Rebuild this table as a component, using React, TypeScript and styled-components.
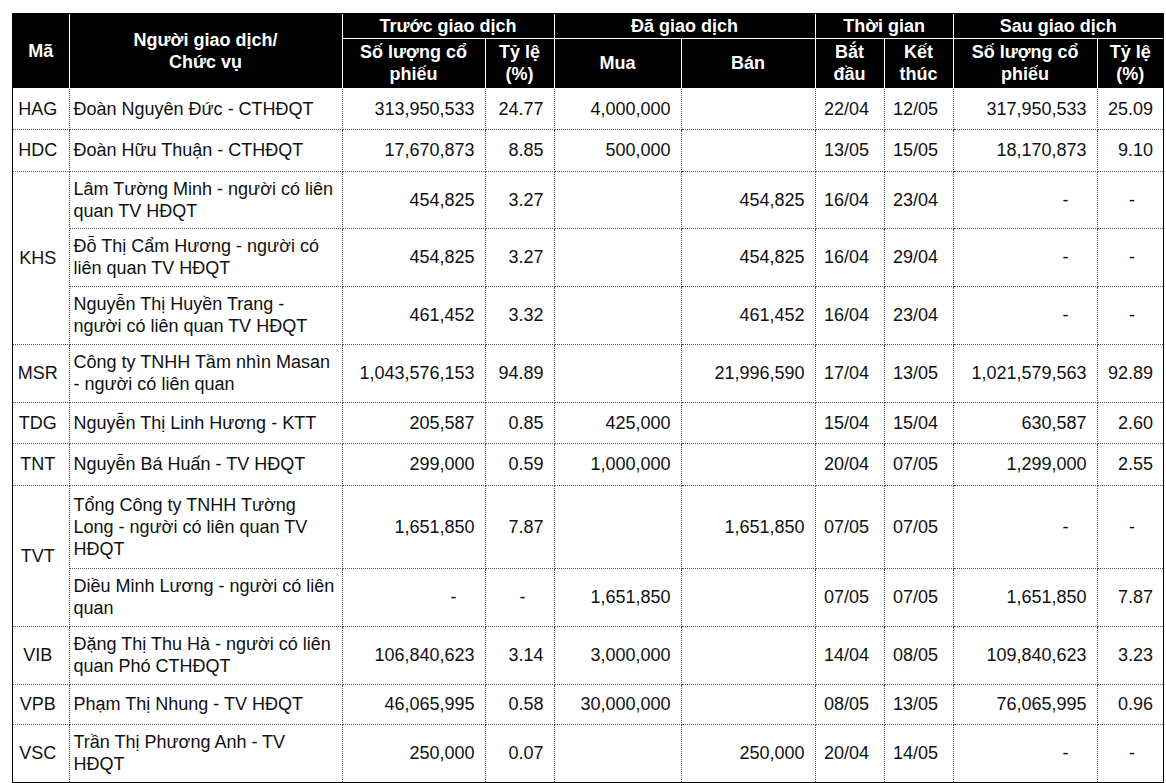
import styled, { createGlobalStyle } from "styled-components";

const GlobalStyle = createGlobalStyle`
  body {
    margin: 0;
    background: #fff;
    font-family: "Liberation Sans", Arial, sans-serif;
  }
`;

const Page = styled.div`
  padding: 13px 0 0 12px;
`;

const Frame = styled.div`
  width: 1152px;
  border: 1px solid #000;
  box-sizing: border-box;
`;

const Table = styled.table`
  width: 100%;
  table-layout: fixed;
  border-collapse: collapse;
  border-style: hidden;
  font-size: 18px;
  color: #111;
`;

const Head = styled.th`
  background: #000;
  color: #fff;
  font-weight: 700;
  font-size: 18px;
  line-height: 22px;
  text-align: center;
  vertical-align: middle;
  border: 1px solid #fff;
  padding: 0 4px;
`;

const HeadRow = styled.tr<{ $h: number }>`
  height: ${(p) => p.$h}px;
`;

const Row = styled.tr<{ $h: number }>`
  height: ${(p) => p.$h}px;
`;

const Cell = styled.td<{ $align?: "left" | "right" | "center"; $dash?: boolean }>`
  border: 1px dotted #555;
  line-height: 22px;
  vertical-align: middle;
  text-align: ${(p) => p.$align || "right"};
  padding: 0 ${(p) => (p.$dash ? "28px" : p.$align === "left" ? "6px" : "10px")} 0 4px;
  white-space: ${(p) => (p.$align === "left" ? "normal" : "nowrap")};
`;

type Trade = {
  name: string;
  before: string;
  beforePct: string;
  buy: string;
  sell: string;
  start: string;
  end: string;
  after: string;
  afterPct: string;
  h: number;
};

type Group = { code: string; rows: Trade[] };

const data: Group[] = [
  {
    code: "HAG",
    rows: [
      { name: "Đoàn Nguyên Đức - CTHĐQT", before: "313,950,533", beforePct: "24.77", buy: "4,000,000", sell: "", start: "22/04", end: "12/05", after: "317,950,533", afterPct: "25.09", h: 41 },
    ],
  },
  {
    code: "HDC",
    rows: [
      { name: "Đoàn Hữu Thuận - CTHĐQT", before: "17,670,873", beforePct: "8.85", buy: "500,000", sell: "", start: "13/05", end: "15/05", after: "18,170,873", afterPct: "9.10", h: 42 },
    ],
  },
  {
    code: "KHS",
    rows: [
      { name: "Lâm Tường Minh - người có liên quan TV HĐQT", before: "454,825", beforePct: "3.27", buy: "", sell: "454,825", start: "16/04", end: "23/04", after: "-", afterPct: "-", h: 57 },
      { name: "Đỗ Thị Cẩm Hương - người có liên quan TV HĐQT", before: "454,825", beforePct: "3.27", buy: "", sell: "454,825", start: "16/04", end: "29/04", after: "-", afterPct: "-", h: 58 },
      { name: "Nguyễn Thị Huyền Trang - người có liên quan TV HĐQT", before: "461,452", beforePct: "3.32", buy: "", sell: "461,452", start: "16/04", end: "23/04", after: "-", afterPct: "-", h: 58 },
    ],
  },
  {
    code: "MSR",
    rows: [
      { name: "Công ty TNHH Tầm nhìn Masan - người có liên quan", before: "1,043,576,153", beforePct: "94.89", buy: "", sell: "21,996,590", start: "17/04", end: "13/05", after: "1,021,579,563", afterPct: "92.89", h: 58 },
    ],
  },
  {
    code: "TDG",
    rows: [
      { name: "Nguyễn Thị Linh Hương - KTT", before: "205,587", beforePct: "0.85", buy: "425,000", sell: "", start: "15/04", end: "15/04", after: "630,587", afterPct: "2.60", h: 41 },
    ],
  },
  {
    code: "TNT",
    rows: [
      { name: "Nguyễn Bá Huấn - TV HĐQT", before: "299,000", beforePct: "0.59", buy: "1,000,000", sell: "", start: "20/04", end: "07/05", after: "1,299,000", afterPct: "2.55", h: 42 },
    ],
  },
  {
    code: "TVT",
    rows: [
      { name: "Tổng Công ty TNHH Tường Long - người có liên quan TV HĐQT", before: "1,651,850", beforePct: "7.87", buy: "", sell: "1,651,850", start: "07/05", end: "07/05", after: "-", afterPct: "-", h: 83 },
      { name: "Diều Minh Lương - người có liên quan", before: "-", beforePct: "-", buy: "1,651,850", sell: "", start: "07/05", end: "07/05", after: "1,651,850", afterPct: "7.87", h: 58 },
    ],
  },
  {
    code: "VIB",
    rows: [
      { name: "Đặng Thị Thu Hà - người có liên quan Phó CTHĐQT", before: "106,840,623", beforePct: "3.14", buy: "3,000,000", sell: "", start: "14/04", end: "08/05", after: "109,840,623", afterPct: "3.23", h: 58 },
    ],
  },
  {
    code: "VPB",
    rows: [
      { name: "Phạm Thị Nhung - TV HĐQT", before: "46,065,995", beforePct: "0.58", buy: "30,000,000", sell: "", start: "08/05", end: "13/05", after: "76,065,995", afterPct: "0.96", h: 40 },
    ],
  },
  {
    code: "VSC",
    rows: [
      { name: "Trần Thị Phương Anh - TV HĐQT", before: "250,000", beforePct: "0.07", buy: "", sell: "250,000", start: "20/04", end: "14/05", after: "-", afterPct: "-", h: 58 },
    ],
  },
];

const widths = [56, 273, 143, 69, 127, 134, 69, 69, 144, 66];

function Num({ value }: { value: string }) {
  return <Cell $dash={value === "-"}>{value}</Cell>;
}

export default function App() {
  return (
    <Page>
      <GlobalStyle />
      <Frame>
        <Table>
          <colgroup>
            {widths.map((w, i) => (
              <col key={i} style={{ width: w }} />
            ))}
          </colgroup>
          <thead>
            <HeadRow $h={24}>
              <Head rowSpan={2}>Mã</Head>
              <Head rowSpan={2}>
                Người giao dịch/
                <br />
                Chức vụ
              </Head>
              <Head colSpan={2}>Trước giao dịch</Head>
              <Head colSpan={2}>Đã giao dịch</Head>
              <Head colSpan={2}>Thời gian</Head>
              <Head colSpan={2}>Sau giao dịch</Head>
            </HeadRow>
            <HeadRow $h={50}>
              <Head>Số lượng cổ phiếu</Head>
              <Head>
                Tỷ lệ
                <br />
                (%)
              </Head>
              <Head>Mua</Head>
              <Head>Bán</Head>
              <Head>
                Bắt
                <br />
                đầu
              </Head>
              <Head>
                Kết
                <br />
                thúc
              </Head>
              <Head>Số lượng cổ phiếu</Head>
              <Head>
                Tỷ lệ
                <br />
                (%)
              </Head>
            </HeadRow>
          </thead>
          <tbody>
            {data.map((g) =>
              g.rows.map((r, i) => (
                <Row key={g.code + i} $h={r.h}>
                  {i === 0 && (
                    <Cell $align="center" rowSpan={g.rows.length}>
                      {g.code}
                    </Cell>
                  )}
                  <Cell $align="left">{r.name}</Cell>
                  <Num value={r.before} />
                  <Num value={r.beforePct} />
                  <Num value={r.buy} />
                  <Num value={r.sell} />
                  <Cell $align="center">{r.start}</Cell>
                  <Cell $align="center">{r.end}</Cell>
                  <Num value={r.after} />
                  <Num value={r.afterPct} />
                </Row>
              ))
            )}
          </tbody>
        </Table>
      </Frame>
    </Page>
  );
}
